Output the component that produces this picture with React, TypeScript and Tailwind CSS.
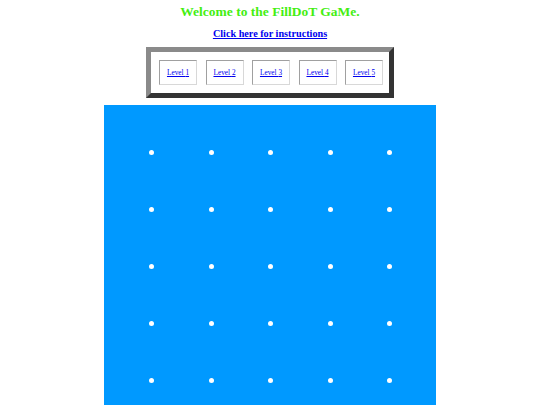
import React from "react";

const levels = [1, 2, 3, 4, 5];
const dots = Array.from({ length: 25 }, (_, i) => i);

export default function App() {
  return (
    <div className="flex min-h-screen flex-col items-center bg-white font-['Liberation_Serif',serif]">
      <h3 className="mt-[4px] text-[13.5px] font-bold leading-[16px] text-[#44ee11]">
        Welcome to the FillDoT GaMe.
      </h3>
      <a
        href="#"
        className="mt-[8px] text-[10.2px] font-bold leading-[12px] text-[#0000ee] underline"
      >
        Click here for instructions
      </a>
      <div className="mt-[7px] flex h-[51px] w-[248px] gap-[8.5px] border-[5px] border-t-[#8a8a8a] border-l-[#8a8a8a] border-r-[#333333] border-b-[#333333] bg-white p-[8px] pr-[6px]">
        {levels.map((n) => (
          <div
            key={n}
            className="flex h-[25px] w-[38px] items-center justify-center border border-t-[#a0a0a0] border-l-[#a0a0a0] border-r-[#d8d8d8] border-b-[#d8d8d8]"
          >
            <a href="#" className="text-[7.3px] leading-none text-[#0000ee] underline">
              Level {n}
            </a>
          </div>
        ))}
      </div>
      <div className="mt-[7px] h-[332px] w-[332px] bg-[#0099ff] pl-[18px] pt-[19px]">
        <div className="grid grid-cols-[repeat(5,59.5px)] auto-rows-[57px]">
          {dots.map((d) => (
            <div key={d} className="flex items-center justify-center">
              <div className="h-[5px] w-[5px] rounded-full bg-white" />
            </div>
          ))}
        </div>
      </div>
    </div>
  );
}
